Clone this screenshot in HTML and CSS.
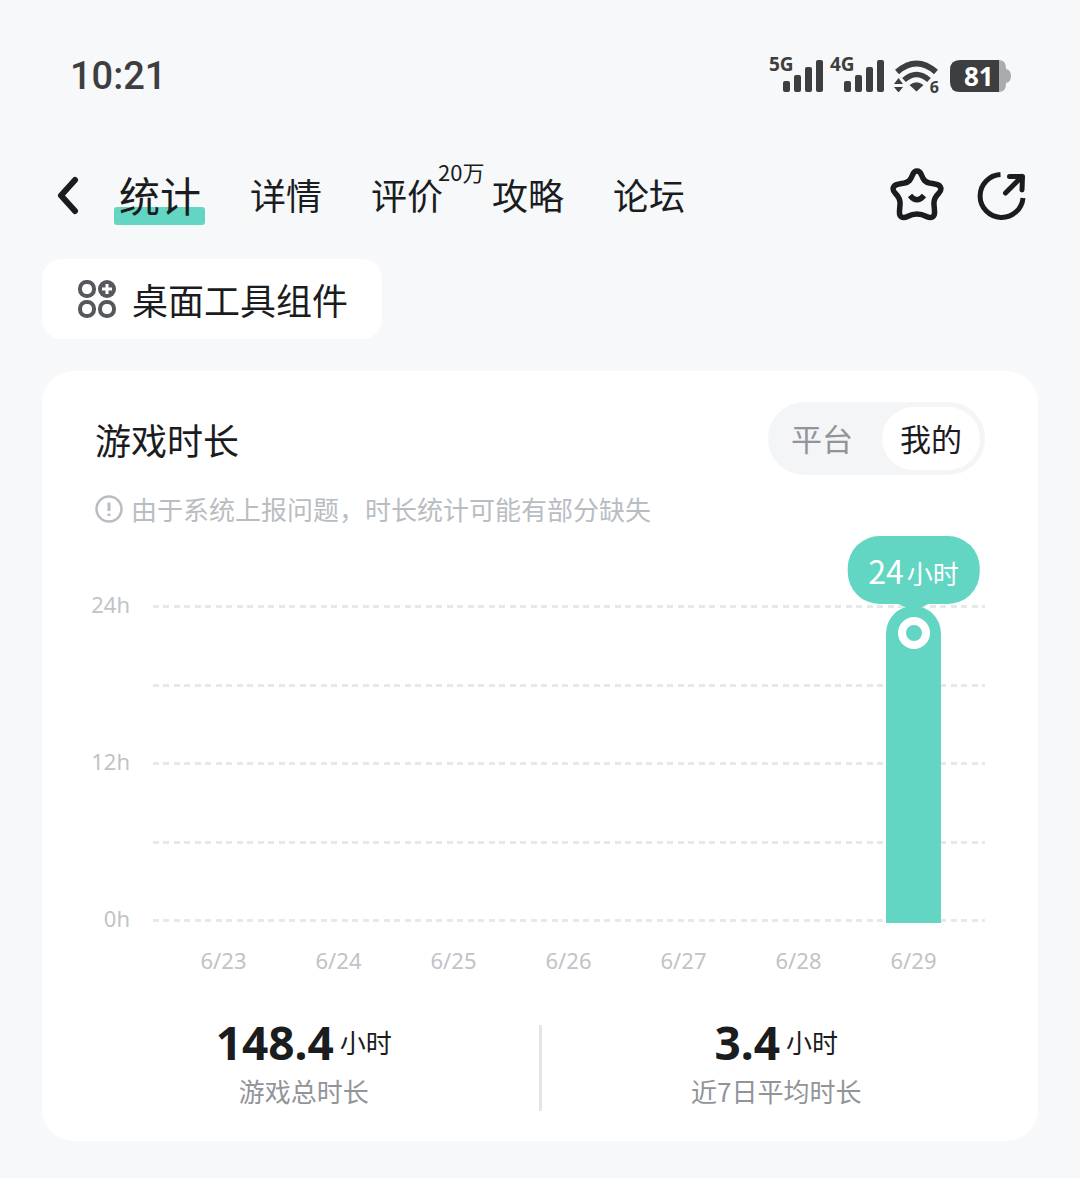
FILE: index.html
```html
<!DOCTYPE html>
<html lang="zh-CN">
<head>
    <meta charset="UTF-8">
    <meta name="viewport" content="width=device-width, initial-scale=1.0">
    <title>游戏时长</title>
    <link rel="stylesheet" href="styles.css">
</head>
<body>
    <div class="status-bar">
        <span class="time">10:21</span>
        <div class="status-icons">
            <div class="signal">
                <span class="network">5G</span>
                <svg width="41" height="32" viewBox="0 0 41 32" fill="#3d3e40">
                    <rect x="1" y="21" width="7" height="11" rx="2"/>
                    <rect x="12" y="15" width="7" height="17" rx="2"/>
                    <rect x="23" y="7" width="7" height="25" rx="2"/>
                    <rect x="34" y="0" width="7" height="32" rx="2"/>
                </svg>
            </div>
            <div class="signal">
                <span class="network">4G</span>
                <svg width="41" height="32" viewBox="0 0 41 32" fill="#3d3e40">
                    <rect x="1" y="21" width="7" height="11" rx="2"/>
                    <rect x="12" y="15" width="7" height="17" rx="2"/>
                    <rect x="23" y="7" width="7" height="25" rx="2"/>
                    <rect x="34" y="0" width="7" height="32" rx="2"/>
                </svg>
            </div>
            <div class="wifi">
                <svg width="45" height="32" viewBox="0 0 45 32" fill="none" stroke="#3d3e40">
                    <path d="M3 12Q22.500 -5 42 12" stroke-width="6"/>
                    <path d="M10 20Q22.500 9 35 20" stroke-width="5.500"/>
                    <path d="M22.500 31.500L15.500 25Q22.500 19.500 29.500 25Z" fill="#3d3e40" stroke="none"/>
                    <path d="M4.500 18L9 24H0ZM4.500 32.500L9 27H0Z" fill="#3d3e40" stroke="none"/>
                </svg>
                <span class="wifi-gen">6</span>
            </div>
            <div class="battery">
                <svg width="61" height="32" viewBox="0 0 61 32">
                    <path d="M48 0C54 0 56 3 56 9Q61 10 61 16Q61 22 56 23C56 29 54 32 48 32Z" fill="#a9abad"/>
                    <path d="M10 0H49V32H10Q0 32 0 22V10Q0 0 10 0Z" fill="#3d3e40"/>
                </svg>
                <span class="battery-level">81</span>
            </div>
        </div>
    </div>

    <header class="top-nav">
        <button type="button" class="icon-btn" aria-label="返回">
            <svg width="24" height="40" viewBox="0 0 24 40" fill="none" stroke="#1b1c1e" stroke-width="6" stroke-linecap="round" stroke-linejoin="round">
                <path d="M19 5L5 20.500L19 36"/>
            </svg>
        </button>
        <nav class="tabs">
            <a href="#" class="tab active">统计</a>
            <a href="#" class="tab">详情</a>
            <a href="#" class="tab">评价<span class="count">20万</span></a>
            <a href="#" class="tab">攻略</a>
            <a href="#" class="tab">论坛</a>
        </nav>
        <div class="actions">
            <button type="button" class="icon-btn" aria-label="收藏">
                <svg width="54" height="54" viewBox="0 1 54 54" fill="none" stroke="#1b1c1e" stroke-width="5.500" stroke-linecap="round" stroke-linejoin="round">
                    <path d="M22.500 8C24.500 2.500 29.500 2.500 31.500 8C33.500 13 35 15 39.500 16L45 17C51.500 18 52.500 22.500 48.500 26.500C44.500 30.500 43.500 33 44 37.500L44.500 44C45 50 41.500 52 36.500 49.500C30 46 24 46 17.500 49.500C12.500 52 9 50 9.500 44L10 37.500C10.500 33 9.500 30.500 5.500 26.500C1.500 22.500 2.500 18 9 17L14.500 16C19 15 20.500 13 22.500 8Z"/>
                    <path d="M20 28.500Q27 37 34 28.500" stroke-linecap="butt"/>
                </svg>
            </button>
            <button type="button" class="icon-btn" aria-label="分享">
                <svg width="50" height="50" viewBox="0 0 50 50" fill="none" stroke="#1b1c1e" stroke-width="5" stroke-linejoin="round">
                    <path d="M23.500 4.500A21.500 21.500 0 1 0 46 28"/>
                    <path d="M28.500 23L45 6.500M32.500 6.500H45.500L45 20" stroke-linecap="round"/>
                </svg>
            </button>
        </div>
    </header>

    <main class="content">
        <button type="button" class="widget-btn">
            <svg width="40" height="40" viewBox="0 0 40 40" fill="none" stroke="#55585c" stroke-width="4">
                <rect x="3" y="3" width="14" height="14" rx="6.500"/>
                <rect x="3" y="23" width="14" height="14" rx="6.500"/>
                <rect x="23" y="23" width="14" height="14" rx="6.500"/>
                <circle cx="30" cy="10" r="9" fill="#55585c" stroke="none"/>
                <path d="M30 5V15M25 10H35" stroke="#fff" stroke-width="3"/>
            </svg>
            桌面工具组件
        </button>

        <section class="card">
            <div class="card-header">
                <h1>游戏时长</h1>
                <div class="switch">
                    <button type="button">平台</button>
                    <button type="button" class="selected">我的</button>
                </div>
            </div>
            <p class="notice">
                <svg width="28" height="28" viewBox="0 0 28 28" fill="none" stroke="#b9bdc2" stroke-width="2.500">
                    <circle cx="14" cy="14" r="12.500"/>
                    <path d="M14 7.500V16M14 18.500V21" stroke-width="3"/>
                </svg>
                由于系统上报问题，时长统计可能有部分缺失
            </p>

            <div class="chart">
                <div class="y-axis">
                    <span>24h</span>
                    <span>12h</span>
                    <span>0h</span>
                </div>
                <div class="plot">
                    <div class="lines">
                        <i></i><i></i><i></i><i></i><i></i>
                    </div>
                    <div class="bars">
                        <div class="bar" style="height: 100%">
                            <div class="tooltip"><span class="tooltip-value">24</span>小时</div>
                            <span class="dot"></span>
                        </div>
                    </div>
                </div>
                <div class="x-axis">
                    <span>6/23</span>
                    <span>6/24</span>
                    <span>6/25</span>
                    <span>6/26</span>
                    <span>6/27</span>
                    <span>6/28</span>
                    <span>6/29</span>
                </div>
            </div>

            <div class="stats">
                <div class="stat">
                    <div class="stat-value"><strong>148.4</strong>小时</div>
                    <div class="stat-label">游戏总时长</div>
                </div>
                <div class="divider"></div>
                <div class="stat">
                    <div class="stat-value"><strong>3.4</strong>小时</div>
                    <div class="stat-label">近7日平均时长</div>
                </div>
            </div>
        </section>
    </main>
</body>
</html>
```
FILE: styles.css
```css
* {
    box-sizing: border-box;
}
body {
    margin: 0;
    background-color: #f6f8fa;
    color: #1b1c1e;
    font-family: "Noto Sans CJK SC", sans-serif;
}
button {
    border: none;
    padding: 0;
    background: none;
    color: inherit;
    font-family: inherit;
    cursor: pointer;
}
svg {
    display: block;
    flex: none;
}

/* Status bar */
.status-bar {
    display: flex;
    justify-content: space-between;
    align-items: center;
    padding: 53px 69px 0 70px;
    color: #3d3e40;
    font-family: "Noto Sans", sans-serif;
}
.time {
    font-family: Roboto, sans-serif;
    font-size: 38px;
    line-height: 46px;
    font-weight: 500;
}
.status-icons {
    display: flex;
    align-items: center;
    height: 44px;
}
.signal {
    position: relative;
    padding-left: 13px;
    margin-right: 7px;
}
.network {
    position: absolute;
    left: 0;
    top: -6px;
    font-size: 19px;
    line-height: 20px;
    font-weight: 700;
}
.wifi {
    position: relative;
    margin: 0 11px 0 3px;
}
.wifi-gen {
    position: absolute;
    right: 0;
    bottom: -3px;
    font-size: 16px;
    line-height: 16px;
    font-weight: 700;
}
.battery {
    position: relative;
}
.battery-level {
    position: absolute;
    top: 0;
    left: 14px;
    color: #fff;
    font-size: 26px;
    line-height: 32px;
    font-weight: 700;
}

/* Top navigation */
.top-nav {
    display: flex;
    align-items: center;
    margin-top: 66px;
    padding: 0 53px 0 56px;
}
.tabs {
    display: flex;
    gap: 49px;
    margin-left: 39px;
}
.tab {
    position: relative;
    padding-bottom: 2px;
    color: #1b1c1e;
    font-size: 36px;
    line-height: 58px;
    text-decoration: none;
}
.tab.active {
    z-index: 0;
    font-size: 41px;
}
.tab.active::before {
    content: "";
    position: absolute;
    z-index: -1;
    left: -5px;
    right: -4px;
    bottom: 0;
    height: 18px;
    border-radius: 3px;
    background-color: #62d6c3;
}
.count {
    position: absolute;
    left: 67px;
    top: -8px;
    font-size: 22px;
    line-height: 28px;
    white-space: nowrap;
}
.actions {
    display: flex;
    align-items: center;
    gap: 33px;
    margin-left: auto;
}

/* Content */
.content {
    padding: 34px 42px 37px;
}
.widget-btn {
    display: flex;
    align-items: center;
    gap: 15px;
    height: 80px;
    padding: 0 34px 0 35px;
    border-radius: 20px;
    background-color: #fff;
    font-size: 36px;
}
.card {
    margin-top: 32px;
    padding: 31px 0 30px;
    border-radius: 32px;
    background-color: #fff;
}
.card-header {
    display: flex;
    justify-content: space-between;
    align-items: center;
    padding: 0 53px;
}
h1 {
    margin: 0;
    font-size: 36px;
    line-height: 48px;
    font-weight: 400;
}
.switch {
    display: flex;
    gap: 11px;
    padding: 5px;
    border-radius: 37px;
    background-color: #f4f5f7;
}
.switch button {
    height: 63px;
    padding: 0 18px 2px;
    border-radius: 32px;
    color: #919498;
    font-size: 31px;
}
.switch .selected {
    background-color: #fff;
    color: #1b1c1e;
}
.notice {
    display: flex;
    align-items: center;
    gap: 8px;
    margin: 16px 53px 0;
    color: #b9bdc2;
    font-size: 26px;
    line-height: 36px;
}

/* Chart */
.chart {
    display: grid;
    grid-template-columns: 41px 1fr;
    column-gap: 23px;
    margin: 78px 53px 0 47px;
    color: #c0c3c7;
    font-family: "Noto Sans", "Noto Sans CJK SC", sans-serif;
    font-size: 22px;
}
.y-axis {
    display: flex;
    flex-direction: column;
    justify-content: space-between;
    margin: -2px 0 2px;
    line-height: 3px;
    text-align: right;
}
.plot {
    display: grid;
    height: 317px;
}
.lines,
.bars {
    grid-area: 1 / 1;
}
.lines {
    display: flex;
    flex-direction: column;
    justify-content: space-between;
}
.lines i {
    height: 3px;
    background: repeating-linear-gradient(to right, #e7e8ea 0 6px, transparent 6px 10px, #e7e8ea 10px 16px, transparent 16px 21px);
}
.bars,
.x-axis {
    display: grid;
    grid-template-columns: repeat(7, 1fr);
    padding: 0 14px 0 13px;
}
.bar {
    grid-column: 7;
    position: relative;
    align-self: end;
    justify-self: center;
    width: 55px;
    margin-bottom: -1px;
    border-radius: 28px 28px 0 0;
    background-color: #62d6c3;
}
.tooltip {
    position: absolute;
    bottom: 100%;
    left: 50%;
    transform: translateX(-50%);
    display: flex;
    align-items: baseline;
    gap: 3px;
    height: 68px;
    margin-bottom: 2px;
    padding: 0 21px;
    border-radius: 32px;
    background-color: #62d6c3;
    color: #fff;
    font-family: "Noto Sans CJK SC", sans-serif;
    font-size: 26px;
    line-height: 68px;
    white-space: nowrap;
}
.tooltip::after {
    content: "";
    position: absolute;
    top: 100%;
    left: 50%;
    width: 30px;
    height: 6px;
    margin-left: -15px;
    background-color: #62d6c3;
    clip-path: polygon(0 0, 100% 0, 75% 60%, 75% 100%, 25% 100%, 25% 60%);
}
.tooltip-value {
    font-size: 32px;
}
.dot {
    position: absolute;
    top: 11px;
    left: 50%;
    width: 32px;
    height: 32px;
    margin-left: -16px;
    border: 8px solid #fff;
    border-radius: 50%;
}
.x-axis {
    grid-column: 2;
    margin-top: 24px;
    line-height: 28px;
    text-align: center;
}

/* Totals */
.stats {
    display: flex;
    align-items: flex-start;
    margin-top: 51px;
    padding: 0 27px;
}
.stat {
    flex: 1;
    text-align: center;
}
.stat-value {
    display: flex;
    justify-content: center;
    align-items: center;
    gap: 6px;
    font-size: 26px;
    line-height: 34px;
}
.stat-value strong {
    font-family: "Noto Sans", sans-serif;
    font-size: 46px;
    line-height: 30px;
    font-weight: 700;
}
.stat-label {
    margin-top: 14px;
    color: #919498;
    font-size: 26px;
    line-height: 36px;
}
.divider {
    width: 3px;
    height: 86px;
    background-color: #e4e5e7;
}
```
